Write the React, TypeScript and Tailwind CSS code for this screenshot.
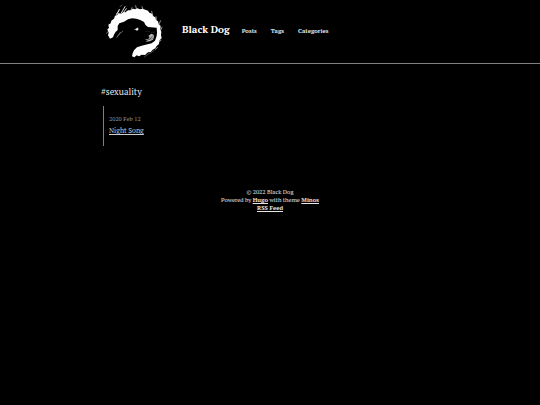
import React from "react";

const links = ["Posts", "Tags", "Categories"];

const Logo = () => (
  <svg viewBox="3 0 204 189" className="h-[63px] w-[68px]" aria-hidden="true">
    <path
      fill="#fff"
      d="M30 116 L24 106 L26 98 L22 88 L27 84 L25 74 L32 70 L34 62 L42 56 L45 47 L52 45 L56 39 L63 42 L70 36 L76 37 L84 31 L92 31 L98 26 L106 28 L112 25 L120 28 L128 26 L136 29 L144 32 L148 38 L156 41 L160 49 L166 52 L168 60 L174 64 L176 72 L182 78 L181 88 L184 96 L183 106 L185 114 L178 122 L177 132 L170 138 L166 145 L158 149 L152 156 L144 157 L135 165 L125 164 L117 169 L110 166 L103 172 L96 169 L98 160 L102 151 L111 142 L125 137 L143 133 L155 130 L165 122 L170 108 L171 98 L170 83 L144 81 L137 76 L132 66 L121 60 L109 56 L96 55 L84 58 L72 65 L58 70 L53 78 L53 90 L46 97 L42 104 L39 112 Z"
    />
    <g fill="none" stroke="#ddd" strokeLinecap="round">
      <path strokeWidth="3" d="M50 44 L58 28 M62 42 L71 27 L75 20 M70 38 L79 26 M50 40 L57 33" />
      <path strokeWidth="2" d="M92 32 L96 23 M109 26 L107 17 M129 28 L126 20 M158 46 L155 34 M169 60 L168 50 M176 74 L182 62 M182 91 L186 82 M178 124 L183 121 M166 148 L172 143 M25 94 L20 99" />
      <path stroke="#888" strokeWidth="2" d="M68 94 L57 103 L50 113 M61 97 L54 108" />
      <path stroke="#777" strokeWidth="2" d="M66 15 L60 20 M134 170 L148 160 M150 160 L162 151" />
    </g>
    <path fill="#e5e5e5" d="M102 89 L107 86 L112 83 L116 83 L114 87 L116 90 L109 92 L108 89 Z" />
    <path fill="#bbb" d="M145 108 L154 101 L161 104 L162 112 L159 119 L149 124 L137 125 L143 121 L134 119 L145 117 L149 111 Z" />
    <path fill="none" stroke="#333" strokeWidth="2" d="M148 120 L158 107 M153 119 L160 112 M139 122 L151 116" />
    <path fill="none" stroke="#555" strokeWidth="1" d="M136 93 L150 95 M152 98 L165 96" />
  </svg>
);

const App = () => {
  return (
    <div className="min-h-screen bg-black font-['PT_Serif','Liberation_Serif',serif] text-[#e6e6e6]">
      <header className="border-b border-[#808080]">
        <div className="mx-auto flex w-full max-w-[338px] items-center">
          <a href="#" aria-label="Home">
            <Logo />
          </a>
          <div className="ml-[13px] flex items-baseline pb-0.5">
            <a href="#" className="text-[10px] leading-4 font-bold text-white">
              Black Dog
            </a>
            <nav className="ml-3 flex gap-[14px] text-[6px] leading-4 font-bold">
              {links.map((link) => (
                <a key={link} href="#">
                  {link}
                </a>
              ))}
            </nav>
          </div>
        </div>
      </header>

      <main className="mx-auto w-full max-w-[338px] pt-5">
        <h1 className="text-[9px] leading-4">#sexuality</h1>
        <ul className="mt-1.5 ml-0.5 border-l border-[#808080] pt-2 pb-[9px] pl-[5px]">
          <li>
            <time dateTime="2020-02-12" className="block text-[6px] leading-[11px] text-[#999999]">
              2020 Feb 12
            </time>
            <a href="#" className="block text-[7px] leading-3 text-[#cccccc] underline">
              Night Song
            </a>
          </li>
        </ul>
      </main>

      <footer className="mt-[42px] text-center text-[6px] leading-2">
        <p>© 2022 Black Dog</p>
        <p>
          Powered by{" "}
          <a href="#" className="font-bold underline">
            Hugo
          </a>{" "}
          with theme{" "}
          <a href="#" className="font-bold underline">
            Minos
          </a>
        </p>
        <p>
          <a href="#" className="font-bold underline">
            RSS Feed
          </a>
        </p>
      </footer>
    </div>
  );
};

export default App;
